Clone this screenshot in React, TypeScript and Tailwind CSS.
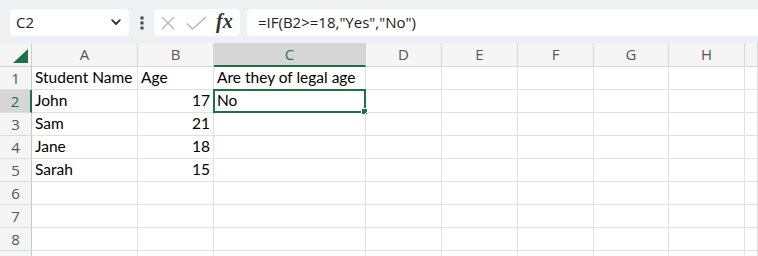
import React from "react";

const cols = ["A", "B", "C", "D", "E", "F", "G", "H", ""];
const widths = ["w-[106px]", "w-[76px]", "w-[152px]", "w-[76px]", "w-[76px]", "w-[76px]", "w-[75px]", "w-[76px]", "flex-1"];

type Cell = { v: string; right?: boolean };
const data: Record<number, Record<number, Cell>> = {
  1: { 0: { v: "Student Name" }, 1: { v: "Age" }, 2: { v: "Are they of legal age" } },
  2: { 0: { v: "John" }, 1: { v: "17", right: true }, 2: { v: "No" } },
  3: { 0: { v: "Sam" }, 1: { v: "21", right: true } },
  4: { 0: { v: "Jane" }, 1: { v: "18", right: true } },
  5: { 0: { v: "Sarah" }, 1: { v: "15", right: true } },
};

export default function App() {
  const rows = [1, 2, 3, 4, 5, 6, 7, 8, 9];
  return (
    <div className="w-[758px] h-[256px] overflow-hidden bg-white" style={{ fontFamily: "'Open Sans', sans-serif" }}>
      {/* formula bar */}
      <div className="h-[43px] bg-[#eef1f4] flex items-start pt-[9px]">
        <div className="ml-[10px] w-[119px] h-[27px] bg-white rounded-[4px] flex items-center pl-[6px] pr-[6px] text-[15px] text-[#222]">
          <span className="flex-1">C2</span>
          <svg width="10" height="7" viewBox="0 0 10 7" className="mr-[2px]">
            <path d="M1.2 1.2 L5 5 L8.8 1.2" fill="none" stroke="#333" strokeWidth="1.8" strokeLinecap="round" strokeLinejoin="round" />
          </svg>
        </div>
        <div className="w-[25px] h-[27px] flex items-center justify-center">
          <svg width="4" height="14" viewBox="0 0 4 14">
            <rect x="0.5" y="0.5" width="3" height="3" fill="#444" />
            <rect x="0.5" y="5.5" width="3" height="3" fill="#444" />
            <rect x="0.5" y="10.5" width="3" height="3" fill="#444" />
          </svg>
        </div>
        <div className="w-[86px] h-[27px] bg-white rounded-[4px] flex items-center pl-[7px]">
          <svg width="14" height="14" viewBox="0 0 14 14">
            <path d="M1 1 L13 13 M13 1 L1 13" stroke="#b5b5b5" strokeWidth="1.3" fill="none" />
          </svg>
          <svg width="21" height="14" viewBox="0 0 21 14" className="ml-[11px]">
            <path d="M1 7.5 L6.5 13 L20 1" stroke="#b5b5b5" strokeWidth="1.3" fill="none" />
          </svg>
          <span className="ml-[9px] text-[20px] italic font-bold text-[#333] leading-none -mt-[3px]" style={{ fontFamily: "'Liberation Serif', serif" }}>
            fx
          </span>
        </div>
        <div className="ml-[7px] flex-1 h-[27px] bg-white rounded-l-[4px] flex items-center pl-[11px] text-[15px] text-[#222]">
          =IF(B2&gt;=18,"Yes","No")
        </div>
      </div>

      {/* column header */}
      <div className="flex h-[24px] bg-[#f5f5f5]">
        <div className="w-[32px] border-r border-b border-[#d0d0d0] flex items-end justify-end pr-[3px] pb-[3px]">
          <svg width="15" height="14" viewBox="0 0 15 14">
            <path d="M15 0 L15 14 L0 14 Z" fill="#1e7145" />
          </svg>
        </div>
        {cols.map((c, i) => (
          <div
            key={i}
            className={`${widths[i]} flex items-center justify-center text-[15px] ${
              i === 2
                ? "bg-[#d6d6d6] text-[#1e7145] border-b-2 border-b-[#1e7145] border-r border-r-[#d0d0d0]"
                : "text-[#555] border-r border-b border-[#d8d8d8]"
            }`}
          >
            {c}
          </div>
        ))}
      </div>

      {/* rows */}
      {rows.map((r) => (
        <div key={r} className="flex h-[23px]">
          <div
            className={`w-[32px] flex items-center justify-center text-[15px] border-b border-[#dcdcdc] ${
              r === 2
                ? "bg-[#d6d6d6] text-[#1e7145] border-r-2 border-r-[#1e7145]"
                : "bg-[#f5f5f5] text-[#555] border-r border-r-[#c8c8c8]"
            }`}
          >
            {r}
          </div>
          {cols.map((c, i) => {
            const cell = data[r]?.[i];
            const selected = r === 2 && i === 2;
            return (
              <div
                key={i}
                className={`${widths[i]} relative border-r border-b border-[#e1e1e1] flex items-center text-[15.5px] text-black ${
                  cell?.right ? "justify-end pr-[3px]" : "pl-[3px]"
                }`}
                style={{ fontFamily: "Lato, sans-serif" }}
              >
                {cell ? <span className="whitespace-nowrap">{cell.v}</span> : null}
                {selected ? (
                  <>
                    <div className="absolute -left-[1px] -top-[1px] -right-[1px] -bottom-[1px] border-2 border-[#1e7145] pointer-events-none" />
                    <div className="absolute -right-[3px] -bottom-[3px] w-[5px] h-[5px] bg-[#1e7145] border border-white box-content" />
                  </>
                ) : null}
              </div>
            );
          })}
        </div>
      ))}
    </div>
  );
}
